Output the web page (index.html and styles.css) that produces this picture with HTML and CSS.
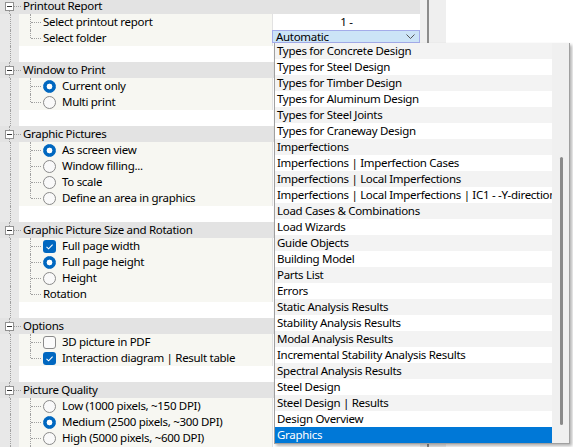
FILE: index.html
```html
<!DOCTYPE html>
<html>
<head>
<meta charset="utf-8">
<link rel="stylesheet" href="styles.css">
</head>
<body>
<div class="app">
  <div class="grid">
    <div class="row head"><div class="hgut"><div class="seg top"></div><div class="box"></div><div class="seg"></div></div><div class="hdash"></div><span>Printout Report</span></div>
    <div class="row"><div class="gut"></div><div class="label"><div class="vl"></div><div class="hl"></div><span class="txt">Select printout report</span></div><div class="value center">1 -</div></div>
    <div class="row last"><div class="gut"></div><div class="label"><div class="vl"></div><div class="hl"></div><span class="txt">Select folder</span></div><div class="value"><div class="combo"><span>Automatic</span><svg width="9" height="5" viewBox="0 0 9 5"><polyline points="0.5,0.5 4.5,4.5 8.5,0.5" fill="none" stroke="#555" stroke-width="1"/></svg></div></div></div>
    <div class="row"><div class="gut"></div><div class="blank"></div></div>

    <div class="row head"><div class="hgut"><div class="seg"></div><div class="box"></div><div class="seg"></div></div><div class="hdash"></div><span>Window to Print</span></div>
    <div class="row"><div class="gut"></div><div class="label"><div class="vl"></div><div class="hl"></div><span class="radio on"></span><span class="txt">Current only</span></div><div class="value"></div></div>
    <div class="row last"><div class="gut"></div><div class="label"><div class="vl"></div><div class="hl"></div><span class="radio"></span><span class="txt">Multi print</span></div><div class="value"></div></div>
    <div class="row"><div class="gut"></div><div class="blank"></div></div>

    <div class="row head"><div class="hgut"><div class="seg"></div><div class="box"></div><div class="seg"></div></div><div class="hdash"></div><span>Graphic Pictures</span></div>
    <div class="row"><div class="gut"></div><div class="label"><div class="vl"></div><div class="hl"></div><span class="radio on"></span><span class="txt">As screen view</span></div><div class="value"></div></div>
    <div class="row"><div class="gut"></div><div class="label"><div class="vl"></div><div class="hl"></div><span class="radio"></span><span class="txt">Window filling...</span></div><div class="value"></div></div>
    <div class="row"><div class="gut"></div><div class="label"><div class="vl"></div><div class="hl"></div><span class="radio"></span><span class="txt">To scale</span></div><div class="value"></div></div>
    <div class="row last"><div class="gut"></div><div class="label"><div class="vl"></div><div class="hl"></div><span class="radio"></span><span class="txt">Define an area in graphics</span></div><div class="value"></div></div>
    <div class="row"><div class="gut"></div><div class="blank"></div></div>

    <div class="row head"><div class="hgut"><div class="seg"></div><div class="box"></div><div class="seg"></div></div><div class="hdash"></div><span>Graphic Picture Size and Rotation</span></div>
    <div class="row"><div class="gut"></div><div class="label"><div class="vl"></div><div class="hl"></div><span class="check on"><svg width="13" height="13" viewBox="0 0 13 13"><polyline points="3.5,6.8 5.6,8.8 9.6,4.6" fill="none" stroke="#fff" stroke-width="1.1"/></svg></span><span class="txt">Full page width</span></div><div class="value"></div></div>
    <div class="row"><div class="gut"></div><div class="label"><div class="vl"></div><div class="hl"></div><span class="radio on"></span><span class="txt">Full page height</span></div><div class="value"></div></div>
    <div class="row"><div class="gut"></div><div class="label"><div class="vl"></div><div class="hl"></div><span class="radio"></span><span class="txt">Height</span></div><div class="value"></div></div>
    <div class="row last"><div class="gut"></div><div class="label"><div class="vl"></div><div class="hl"></div><span class="txt">Rotation</span></div><div class="value"></div></div>
    <div class="row"><div class="gut"></div><div class="blank"></div></div>

    <div class="row head"><div class="hgut"><div class="seg"></div><div class="box"></div><div class="seg"></div></div><div class="hdash"></div><span>Options</span></div>
    <div class="row"><div class="gut"></div><div class="label"><div class="vl"></div><div class="hl"></div><span class="check"></span><span class="txt">3D picture in PDF</span></div><div class="value"></div></div>
    <div class="row last"><div class="gut"></div><div class="label"><div class="vl"></div><div class="hl"></div><span class="check on"><svg width="13" height="13" viewBox="0 0 13 13"><polyline points="3.5,6.8 5.6,8.8 9.6,4.6" fill="none" stroke="#fff" stroke-width="1.1"/></svg></span><span class="txt">Interaction diagram | Result table</span></div><div class="value"></div></div>
    <div class="row"><div class="gut"></div><div class="blank"></div></div>

    <div class="row head"><div class="hgut"><div class="seg"></div><div class="box"></div><div class="seg"></div></div><div class="hdash"></div><span>Picture Quality</span></div>
    <div class="row"><div class="gut"></div><div class="label"><div class="vl"></div><div class="hl"></div><span class="radio"></span><span class="txt">Low (1000 pixels, ~150 DPI)</span></div><div class="value"></div></div>
    <div class="row"><div class="gut"></div><div class="label"><div class="vl"></div><div class="hl"></div><span class="radio on"></span><span class="txt">Medium (2500 pixels, ~300 DPI)</span></div><div class="value"></div></div>
    <div class="row"><div class="gut"></div><div class="label"><div class="vl"></div><div class="hl"></div><span class="radio"></span><span class="txt">High (5000 pixels, ~600 DPI)</span></div><div class="value"></div></div>
    <div class="row"><div class="gut"></div><div class="label"><div class="vl"></div><div class="hl"></div><span class="radio"></span></div><div class="value"></div></div>
  </div>
  <div class="vscroll"><div class="vthumb"></div></div>
  <div class="rightpane"></div>

  <div class="popup">
    <div class="list">
      <div class="item">Types for Concrete Design</div>
      <div class="item">Types for Steel Design</div>
      <div class="item">Types for Timber Design</div>
      <div class="item">Types for Aluminum Design</div>
      <div class="item">Types for Steel Joints</div>
      <div class="item">Types for Craneway Design</div>
      <div class="item">Imperfections</div>
      <div class="item">Imperfections | Imperfection Cases</div>
      <div class="item">Imperfections | Local Imperfections</div>
      <div class="item">Imperfections | Local Imperfections | IC1 - -Y-direction</div>
      <div class="item">Load Cases &amp; Combinations</div>
      <div class="item">Load Wizards</div>
      <div class="item">Guide Objects</div>
      <div class="item">Building Model</div>
      <div class="item">Parts List</div>
      <div class="item">Errors</div>
      <div class="item">Static Analysis Results</div>
      <div class="item">Stability Analysis Results</div>
      <div class="item">Modal Analysis Results</div>
      <div class="item">Incremental Stability Analysis Results</div>
      <div class="item">Spectral Analysis Results</div>
      <div class="item">Steel Design</div>
      <div class="item">Steel Design | Results</div>
      <div class="item">Design Overview</div>
      <div class="item selected">Graphics</div>
    </div>
    <div class="pscroll"><div class="pthumb"></div></div>
  </div>
</div>
</body>
</html>
```

FILE: styles.css
```css
* { box-sizing: border-box; }
html, body { margin: 0; padding: 0; }
body {
  font-family: "Noto Sans", "Open Sans", sans-serif;
  font-size: 11.5px;
  letter-spacing: -0.3px;
  color: #000;
  background: #fff;
  overflow: hidden;
}
.app {
  display: flex;
  height: 447px;
  width: 573px;
  position: relative;
  overflow: hidden;
}
.grid {
  width: 420px;
  flex: none;
  margin-top: -2px;
  display: flex;
  flex-direction: column;
}
.row {
  display: flex;
  height: 16px;
  line-height: 16px;
  flex: none;
  white-space: nowrap;
}
.gut {
  width: 19px;
  flex: none;
  background: #e8e8e8;
  display: flex;
}
.gut::before {
  content: "";
  width: 10px;
  border-right: 1px dotted #a0a0a0;
}
.row.head { background: #e3e3e3; }
.hgut {
  width: 14px;
  flex: none;
  padding-left: 5px;
  display: flex;
  flex-direction: column;
}
.seg {
  flex: 1;
  width: 5px;
  border-right: 1px dotted #a0a0a0;
}
.seg.top { border-right-color: transparent; }
.box {
  width: 9px;
  height: 9px;
  flex: none;
  border: 1px solid #919191;
  background: linear-gradient(#333, #333) center / 5px 1px no-repeat, #fff;
}
.hdash {
  width: 7px;
  align-self: center;
  border-top: 1px dotted #a0a0a0;
  margin-right: 2px;
}
.label {
  width: 253px;
  flex: none;
  background: #f7f7f2;
  display: flex;
  align-items: center;
}
.vl {
  width: 12px;
  flex: none;
  align-self: stretch;
  border-right: 1px dotted #a0a0a0;
}
.last .vl {
  align-self: flex-start;
  height: 8px;
}
.hl {
  width: 10px;
  flex: none;
  border-top: 1px dotted #a0a0a0;
  margin-right: 2px;
}
.value {
  flex: 1;
  border-left: 1px solid #e2e2e2;
  background: #fff;
}
.value.center { text-align: center; }
.blank { flex: 1; background: #fff; }

.radio, .check {
  width: 13px;
  height: 13px;
  flex: none;
  margin-right: 6px;
  display: block;
}
.radio {
  border-radius: 50%;
  border: 1px solid #8a8a8a;
  background: #f9f9f9;
}
.radio.on {
  border-color: #0067c0;
  background: radial-gradient(circle, #fff 0 2.6px, #0067c0 3.2px);
}
.check {
  border-radius: 3px;
  border: 1px solid #8a8a8a;
  background: #fbfbfb;
}
.check.on {
  border: none;
  background: #0067c0;
}
.check svg { display: block; }

.combo {
  height: 13px;
  margin-left: -1px;
  border: 1px solid #a4acea;
  background: #cce4f7;
  display: flex;
  align-items: center;
  justify-content: space-between;
  padding: 0 4px 0 3px;
  line-height: 11px;
}
.combo svg { display: block; }

.vscroll {
  width: 26px;
  flex: none;
  background: #efefef;
  padding-left: 7px;
}
.vthumb {
  width: 2px;
  height: 100%;
  background: #8c8c8c;
}
.rightpane { flex: 1; background: #fff; }

.popup {
  position: absolute;
  left: 274px;
  top: 43px;
  width: 296px;
  height: 401px;
  border: 1px solid #a0a0a0;
  border-top: none;
  background: #f0f0f0;
  box-shadow: 2px 2px 3px rgba(0, 0, 0, 0.3);
  display: flex;
}
.list {
  width: 277px;
  flex: none;
  display: flex;
  flex-direction: column;
}
.item {
  height: 16px;
  line-height: 16px;
  padding-left: 2px;
  white-space: nowrap;
  background: #fff;
}
.item:nth-child(odd) { background: #f3f3f3; }
.item.selected { background: #0078d7; color: #fff; }
.pscroll {
  flex: 1;
  background: #f0f0f0;
  padding-left: 8px;
  padding-top: 114px;
}
.pthumb {
  width: 3px;
  height: 268px;
  border-radius: 2px;
  background: #8a8a8a;
}
```
